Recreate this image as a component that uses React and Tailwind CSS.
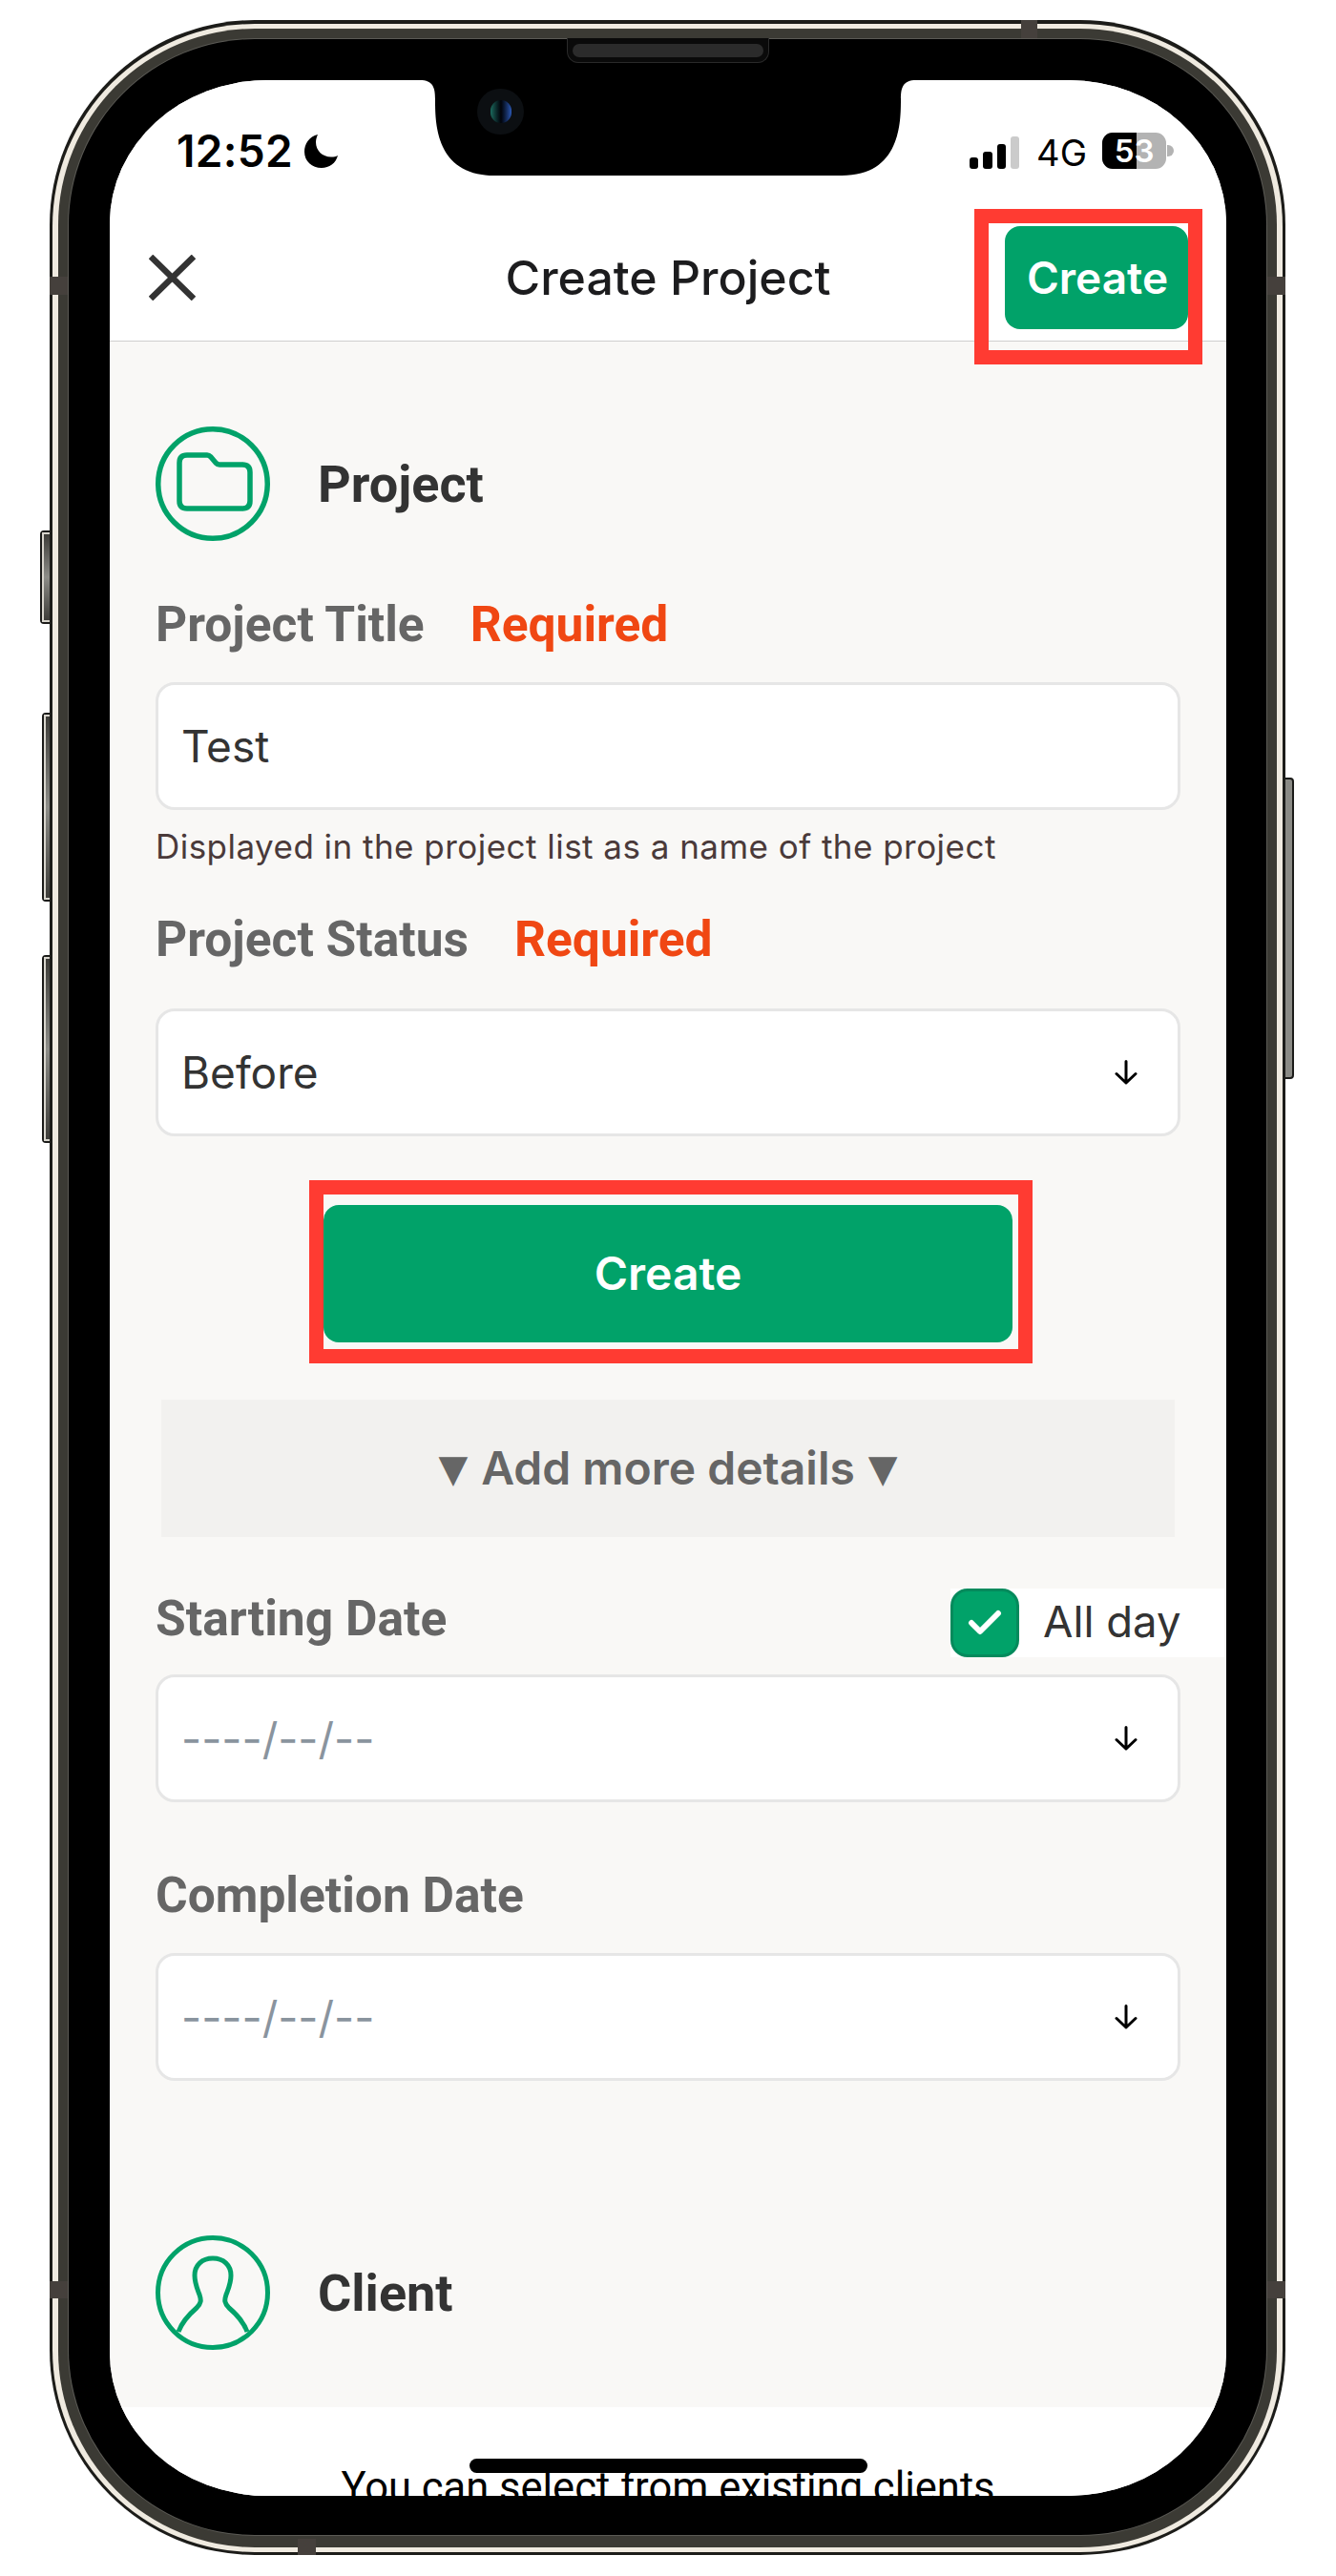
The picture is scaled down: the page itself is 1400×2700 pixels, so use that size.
const GREEN = "bg-[#01a269]";

function SideBtn({ cls }) {
  return (
    <div className={"absolute bg-[#8a8a85] border-[2px] border-[#1b1b19] rounded-l-[4px] " + cls}>
      <div className="h-full w-full border-l-[2px] border-y-[2px] border-[#d8d5cd] bg-gradient-to-b from-[#3e3d39] via-[#8d8d88] to-[#3e3d39]" />
    </div>
  );
}

function Arrow() {
  return (
    <svg width="24" height="26" viewBox="0 0 24 26" fill="none" stroke="#000" strokeWidth="3" strokeLinecap="round" strokeLinejoin="round">
      <path d="M12 1.5V24M2 14.5L12 24L22 14.5" />
    </svg>
  );
}

function Field({ children, select, placeholder }) {
  return (
    <div className="h-[134px] bg-white border-[3px] border-[#e6e6e6] rounded-[20px] flex items-center justify-between pl-[24px] pr-[42px]">
      <span className={"font-['Inter'] text-[46px] leading-[56px] " + (placeholder ? "text-[#8a949e]" : "text-[#333333]")}>{children}</span>
      {select && <Arrow />}
    </div>
  );
}

function Label({ children, required, className = "" }) {
  return (
    <div className={"flex items-center h-[58px] font-['Roboto'] font-bold text-[51.5px] leading-[58px] " + className}>
      <span className="text-[#666666]">{children}</span>
      {required && <span className="ml-[48px] text-[#f04713]">Required</span>}
    </div>
  );
}

export default function App() {
  return (
    <div className="relative w-[1400px] h-[2700px] bg-white overflow-hidden pl-[52px] pt-[21px]">
      <div className="relative w-[1295px] h-[2657px]">
        <SideBtn cls="left-[-10px] top-[535px] w-[12px] h-[98px]" />
        <SideBtn cls="left-[-8px] top-[726px] w-[10px] h-[198px]" />
        <SideBtn cls="left-[-8px] top-[980px] w-[10px] h-[197px]" />
        <div className="absolute right-[-9px] top-[794px] w-[11px] h-[316px] bg-[#8a8a85] border-[2px] border-[#1b1b19] rounded-r-[4px]" />

        <div className="relative h-full w-full rounded-[215px] bg-[#1c1c19] pt-[4px] px-[3px] pb-[3px]">
          <div className="h-full w-full rounded-[212px] bg-[#efeae0] pt-[5px] px-[6px] pb-[5px]">
            <div className="h-full w-full rounded-[206px] bg-[#3b3a34] pt-[10px] px-[10px] pb-[12px]">
              <div className="h-full w-full rounded-[196px] bg-[#5b5a55] p-[1px]">
                <div className="h-full w-full rounded-[195px] bg-black pt-[43px] pb-[41px] pl-[43px] pr-[42px]">
                  <div className="relative w-[1170px] h-[2532px] rounded-[165px/150px] overflow-hidden bg-white flex flex-col">
                    {/* header */}
                    <div className="bg-white border-b border-[#cfcfcf] h-[274px] shrink-0">
                      <div className="flex justify-between items-center h-[38px] mt-[55px] pl-[70px] pr-[55px]">
                        <div className="flex items-center gap-[12px]">
                          <span className="font-['Inter'] font-semibold text-[46px] leading-[38px] text-black tracking-[0.3px]">12:52</span>
                          <svg width="36" height="36" viewBox="0 0 36 36" fill="#000">
                            <path d="M14 1C5 3 0 11 0 19C0 29 8 36 18 36C26 36 33 31 35 23C33 24 31 24.5 28 24.5C19 24.5 12 18 12 9C12 6 13 3 14 1Z" />
                          </svg>
                        </div>
                        <div className="flex items-center">
                          <svg width="52" height="34" viewBox="0 0 52 34" className="mt-[4px]">
                            <rect x="0" y="22" width="9" height="12" rx="3" fill="#000" />
                            <rect x="14" y="16" width="10" height="18" rx="3" fill="#000" />
                            <rect x="29" y="8" width="9" height="26" rx="3" fill="#000" />
                            <rect x="43" y="0" width="9" height="34" rx="3" fill="#cbcbcb" />
                          </svg>
                          <span className="ml-[18px] font-['Inter'] font-normal text-[38px] leading-[38px] text-black mt-[3px]">4G</span>
                          <div className="ml-[16px] flex items-center">
                            <div className="relative w-[67px] h-[38px] rounded-[11px] overflow-hidden bg-[#b3b3b3]">
                              <div className="absolute left-0 top-0 bottom-0 w-[36px] bg-black" />
                              <div className="relative h-full flex items-center justify-center font-['Inter'] font-semibold text-[33px] leading-[38px] text-white">53</div>
                            </div>
                            <div className="ml-[1px] w-[7px] h-[12px] rounded-r-[6px] bg-[#b3b3b3]" />
                          </div>
                        </div>
                      </div>
                      <div className="grid grid-cols-[1fr_auto_1fr] items-center h-[108px] mt-[60px]">
                        <div className="pl-[41px]">
                          <svg width="49" height="48" viewBox="0 0 49 48" fill="none" stroke="#333333" strokeWidth="6.5" className="block">
                            <path d="M2 2L47 46M47 2L2 46" />
                          </svg>
                        </div>
                        <div className="font-['Inter'] font-medium text-[50px] leading-[60px] text-[#1c1c1e]">Create Project</div>
                        <div className="flex justify-end pr-[40px]">
                          <div className={"w-[192px] h-[108px] pl-[2px] rounded-[16px] flex items-center justify-center font-['Inter'] font-semibold text-[46px] text-white " + GREEN}>Create</div>
                        </div>
                      </div>
                    </div>

                    {/* body */}
                    <div className="bg-[#f9f8f6] px-[48px] pt-[89px] pb-[60px] shrink-0">
                      <div className="flex items-center gap-[50px] h-[120px]">
                        <svg width="120" height="120" viewBox="0 0 120 120" fill="none" stroke="#01a269" strokeWidth="5.5" className="block">
                          <circle cx="60" cy="60" r="57.25" />
                          <path d="M25 38Q25 30 33 30H54Q56 30 58 32L63 38Q65 40 67 40H91Q99 40 99 48V78Q99 86 91 86H33Q25 86 25 78Z" />
                        </svg>
                        <span className="font-['Roboto'] font-bold text-[54px] text-[#333333]">Project</span>
                      </div>

                      <Label required className="mt-[59px]">Project Title</Label>
                      <div className="mt-[31px]"><Field>Test</Field></div>
                      <div className="mt-[16px] font-['Inter'] text-[35px] leading-[44px] text-[#4a3a3a] tracking-[0.47px]">Displayed in the project list as a name of the project</div>

                      <Label required className="mt-[47px]">Project Status</Label>
                      <div className="mt-[43px]"><Field select>Before</Field></div>

                      <div className={"mt-[72px] mx-auto w-[722px] h-[144px] rounded-[16px] flex items-center justify-center font-['Inter'] font-semibold text-[48px] text-white " + GREEN}>Create</div>

                      <div className="mt-[60px] mx-auto w-[1062px] h-[144px] bg-[#f2f1ef] flex items-center justify-center gap-[14px] font-['Inter'] font-semibold text-[48px] text-[#666666]">
                        <span className="font-['DejaVu_Sans'] text-[40px]">▼</span>
                        <span>Add more details</span>
                        <span className="font-['DejaVu_Sans'] text-[40px]">▼</span>
                      </div>

                      <div className="mt-[54px] flex items-center justify-between h-[72px] -mr-[46px]">
                        <Label className="-mt-[8px]">Starting Date</Label>
                        <div className="flex items-center bg-white w-[287px] h-[72px]">
                          <div className={"w-[72px] h-[72px] rounded-[18px] border-[3px] border-[#058a5c] flex items-center justify-center " + GREEN}>
                            <svg width="36" height="28" viewBox="0 0 36 28" fill="none" stroke="#fff" strokeWidth="6" strokeLinecap="round" strokeLinejoin="round">
                              <path d="M4 14L13 23L32 4" />
                            </svg>
                          </div>
                          <span className="ml-[25px] -mt-[2px] font-['Inter'] text-[45.5px] text-[#333333]">All day</span>
                        </div>
                      </div>
                      <div className="mt-[18px]"><Field select placeholder>----/--/--</Field></div>

                      <Label className="mt-[69px]">Completion Date</Label>
                      <div className="mt-[31px]"><Field select placeholder>----/--/--</Field></div>

                      <div className="mt-[162px] flex items-center gap-[50px] h-[120px]">
                        <svg width="120" height="120" viewBox="0 0 120 120" fill="none" stroke="#01a269" strokeWidth="5" className="block">
                          <circle cx="60" cy="60" r="57.5" />
                          <path d="M24 101C28 90 36 82 43 76C48 71 48 68 46 62C43 54 41 50 41 42C41 31 49 24 60 24C71 24 79 31 79 42C79 50 77 54 74 62C72 68 72 71 77 76C84 82 92 90 96 101" />
                        </svg>
                        <span className="font-['Roboto'] font-bold text-[54px] text-[#333333]">Client</span>
                      </div>
                    </div>

                    {/* bottom */}
                    <div className="flex-1 bg-white pt-[58px] text-center font-['Roboto'] text-[43.5px] leading-[54px] text-black">You can select from existing clients</div>

                    {/* home indicator */}
                    <div className="absolute left-[377px] top-[2493px] w-[417px] h-[15px] rounded-full bg-black" />

                    {/* notch */}
                    <svg className="absolute left-[325px] top-0" width="520" height="100" viewBox="0 0 520 100" fill="#000">
                      <path d="M0 0H520C506 0 504 8 504 20C504 44 504 100 442 100H78C16 100 16 44 16 20C16 8 14 0 0 0Z" />
                    </svg>

                    {/* red annotation boxes */}
                    <div className="absolute left-[906px] top-[135px] w-[239px] h-[163px] border-[15px] border-[#ff3b32]" />
                    <div className="absolute left-[209px] top-[1153px] w-[758px] h-[192px] border-[15px] border-[#ff3b32]" />
                  </div>
                </div>
              </div>
            </div>
          </div>
          {/* antenna bands */}
          <div className="absolute left-0 top-[269px] w-[19px] h-[19px] bg-[#45403c]" />
          <div className="absolute right-0 top-[269px] w-[19px] h-[19px] bg-[#45403c]" />
          <div className="absolute left-0 top-[2370px] w-[19px] h-[18px] bg-[#45403c]" />
          <div className="absolute right-0 top-[2370px] w-[19px] h-[18px] bg-[#45403c]" />
          <div className="absolute left-[1018px] top-0 w-[17px] h-[19px] bg-[#45403c]" />
          <div className="absolute left-[260px] bottom-0 w-[19px] h-[17px] bg-[#45403c]" />
        </div>

        {/* speaker + camera in bezel */}
        <div className="absolute left-[542px] top-[19px] w-[212px] h-[26px] rounded-b-[12px] border border-t-0 border-[#2a2a2a] bg-[#0a0a0a] flex items-center justify-center">
          <div className="w-[200px] h-[14px] rounded-full bg-[#2b2b2b]" />
        </div>
        <div className="absolute left-[448px] top-[72px] w-[49px] h-[48px] rounded-full bg-[#0c0f12] flex items-center justify-center">
          <div className="w-[22px] h-[24px] rounded-full bg-gradient-to-r from-[#1b6b5e] via-[#02040a] to-[#2b58b5]" />
        </div>
      </div>
    </div>
  );
}
